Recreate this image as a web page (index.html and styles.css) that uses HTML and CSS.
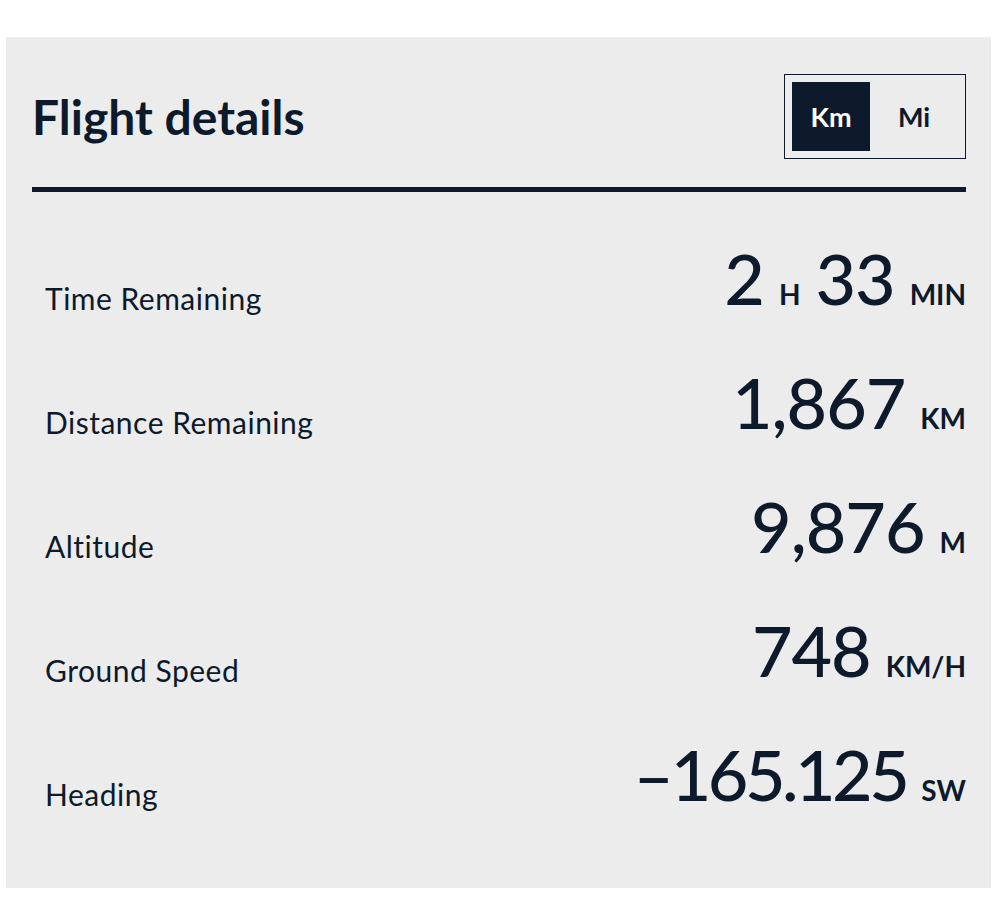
FILE: index.html
```html
<!DOCTYPE html>
<html lang="en">
<head>
<meta charset="utf-8">
<title>Flight details</title>
<link rel="stylesheet" href="styles.css">
</head>
<body>
<section class="panel">
  <header class="head">
    <h1 class="title">Flight details</h1>
    <div class="toggle">
      <button class="opt active">Km</button>
      <button class="opt">Mi</button>
    </div>
  </header>
  <div class="rule"></div>
  <div class="rows">
    <div class="row">
      <span class="label">Time Remaining</span>
      <span class="value">2<span class="unit mid">H</span>33<span class="unit">MIN</span></span>
    </div>
    <div class="row">
      <span class="label">Distance Remaining</span>
      <span class="value">1,867<span class="unit">KM</span></span>
    </div>
    <div class="row">
      <span class="label">Altitude</span>
      <span class="value">9,876<span class="unit">M</span></span>
    </div>
    <div class="row">
      <span class="label">Ground Speed</span>
      <span class="value">748<span class="unit">KM/H</span></span>
    </div>
    <div class="row">
      <span class="label">Heading</span>
      <span class="value tight">–165.125<span class="unit">SW</span></span>
    </div>
  </div>
</section>
</body>
</html>
```

FILE: styles.css
```css
* { box-sizing: border-box; }
html, body { margin: 0; padding: 0; background: #ffffff; }
body {
  font-family: Lato, "Liberation Sans", sans-serif;
  color: #0c1a2c;
  padding: 37px 6px 0 6px;
}
.panel {
  width: 985px;
  height: 851px;
  background: #ececec;
  padding: 37px 25px 0 26px;
}
.head {
  display: flex;
  align-items: center;
  justify-content: space-between;
  height: 85px;
}
.title {
  margin: 0;
  font-size: 48px;
  font-weight: 700;
  line-height: 1;
}
.toggle {
  display: flex;
  width: 182px;
  height: 85px;
  border: 1.5px solid #0c1a2c;
  padding: 7px;
}
.opt {
  flex: 1;
  border: 0;
  background: transparent;
  font-family: Lato, "Liberation Sans", sans-serif;
  font-weight: 700;
  font-size: 27px;
  color: #0c1a2c;
  padding: 0;
}
.opt.active {
  flex: 0 0 78px;
  background: #0c1a2c;
  color: #ffffff;
}
.rule {
  height: 5px;
  background: #0c1a2c;
  margin-top: 28px;
}
.rows {
  display: flex;
  flex-direction: column;
}
.row {
  display: flex;
  justify-content: space-between;
  align-items: flex-end;
  height: 124px;
  padding: 0 0 3px 13px;
}
.label {
  font-size: 30px;
  line-height: 30px;
  font-weight: 400;
  letter-spacing: 0.5px;
}
.value {
  font-size: 70px;
  line-height: 70px;
  font-weight: 500;
  letter-spacing: -1px;
}
.value.tight { letter-spacing: -3.5px; }
.unit {
  font-size: 28px;
  line-height: 28px;
  font-weight: 700;
  letter-spacing: 0;
  margin-left: 15px;
}
.unit.mid { margin-right: 15px; }
```
